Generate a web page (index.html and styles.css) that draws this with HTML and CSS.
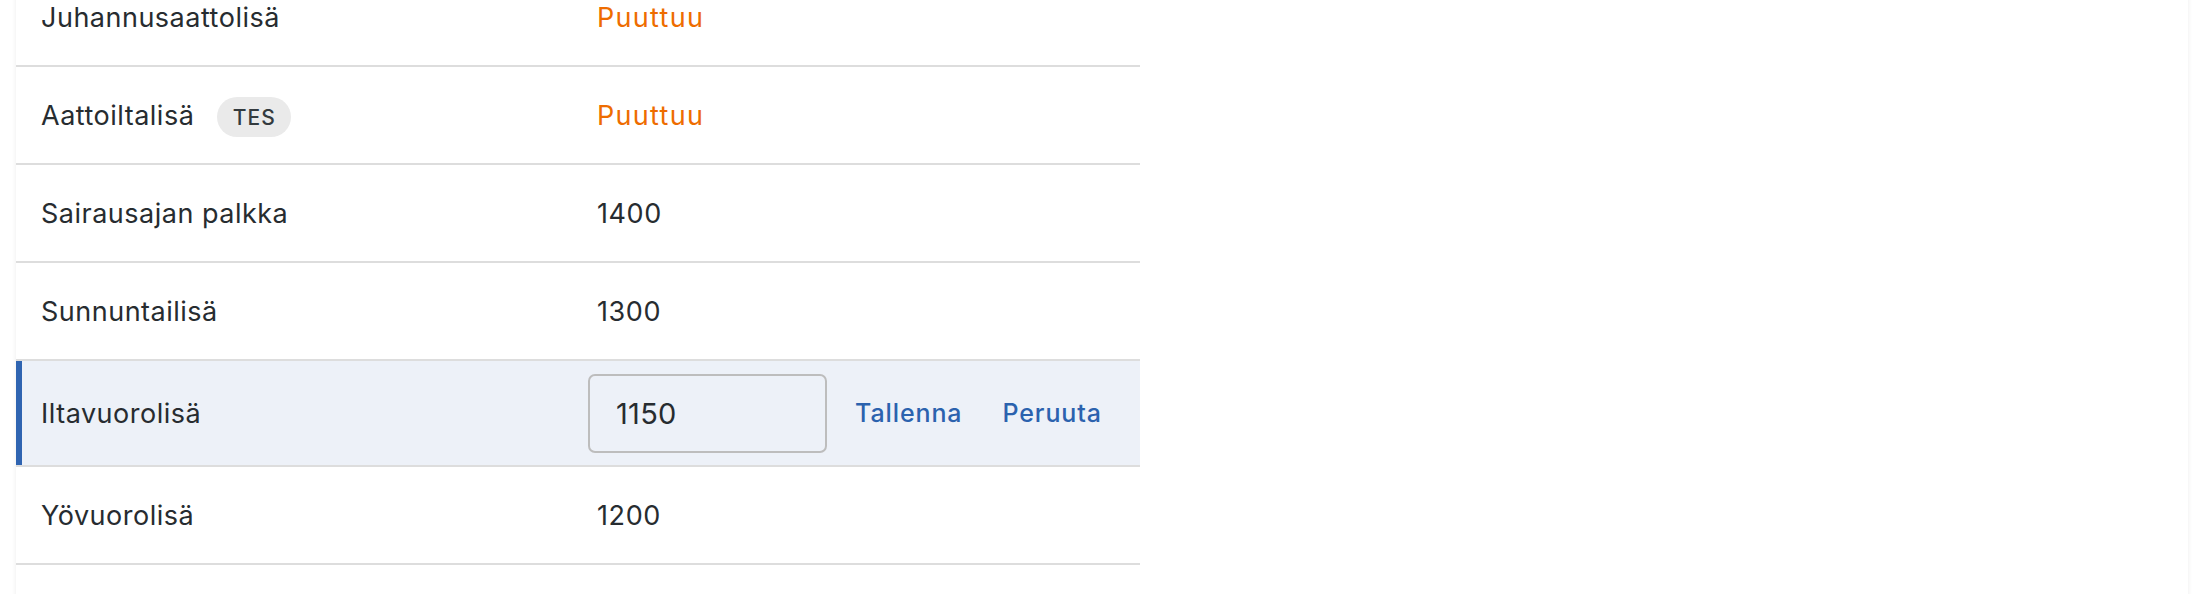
FILE: index.html
```html
<!DOCTYPE html>
<html lang="fi">
<head>
<meta charset="utf-8">
<title>Lisät</title>
<link rel="stylesheet" href="styles.css">
</head>
<body>
<div class="card">
  <div class="table">
    <div class="row">
      <div class="label">Juhannusaattolisä</div>
      <div class="value missing">Puuttuu</div>
    </div>
    <div class="row">
      <div class="label">Aattoiltalisä <span class="badge">TES</span></div>
      <div class="value missing">Puuttuu</div>
    </div>
    <div class="row">
      <div class="label">Sairausajan palkka</div>
      <div class="value">1400</div>
    </div>
    <div class="row">
      <div class="label">Sunnuntailisä</div>
      <div class="value">1300</div>
    </div>
    <div class="row editing">
      <div class="label">Iltavuorolisä</div>
      <div class="value edit">
        <input class="input" type="text" value="1150">
        <button class="link">Tallenna</button>
        <button class="link">Peruuta</button>
      </div>
    </div>
    <div class="row">
      <div class="label">Yövuorolisä</div>
      <div class="value">1200</div>
    </div>
    <div class="row">
      <div class="label"></div>
      <div class="value"></div>
    </div>
  </div>
</div>
</body>
</html>
```
FILE: styles.css
```css
html, body {
  margin: 0;
  padding: 0;
  background: #ffffff;
  overflow: hidden;
}
body {
  font-family: Inter, "Noto Sans", sans-serif;
  color: #272c30;
}
.card {
  margin: 0 16px;
  background: #ffffff;
  box-shadow: 0 0 5px rgba(0, 0, 0, 0.08);
  min-height: 700px;
}
.table {
  width: 1124px;
  margin-top: -31px;
}
.row {
  display: grid;
  grid-template-columns: 556px 1fr;
  align-items: center;
  height: 96px;
  border-bottom: 2px solid #dddddd;
}
.row.editing {
  height: 104px;
  background: #edf1f8;
  box-shadow: inset 6px 0 0 #2f64b1;
}
.label {
  padding-left: 25px;
  font-size: 27px;
  letter-spacing: 0.5px;
  display: flex;
  align-items: center;
  gap: 23px;
}
.value {
  padding-left: 25px;
  font-size: 27px;
  letter-spacing: 0.6px;
}
.missing {
  color: #ee6c00;
  letter-spacing: 1.3px;
}
.badge {
  display: inline-flex;
  align-items: center;
  justify-content: center;
  height: 40px;
  width: 74px;
  border-radius: 20px;
  background: #eaeaea;
  font-size: 21px;
  font-weight: 500;
  letter-spacing: 1px;
  color: #333a3e;
  margin-top: 4px;
}
.edit {
  display: flex;
  align-items: center;
  padding-left: 16px;
}
.input {
  box-sizing: border-box;
  width: 239px;
  height: 79px;
  border: 2px solid #bdbdbd;
  border-radius: 7px;
  background: #edf1f8;
  padding: 0 0 0 26px;
  font-family: Inter, "Noto Sans", sans-serif;
  font-size: 29px;
  letter-spacing: 0.3px;
  color: #272c30;
  margin-right: 28px;
}
.link {
  background: none;
  border: 0;
  padding: 0;
  font-family: Inter, "Noto Sans", sans-serif;
  font-size: 25px;
  font-weight: 500;
  letter-spacing: 0.9px;
  color: #2b62ae;
  margin-right: 40px;
  cursor: pointer;
}
```
